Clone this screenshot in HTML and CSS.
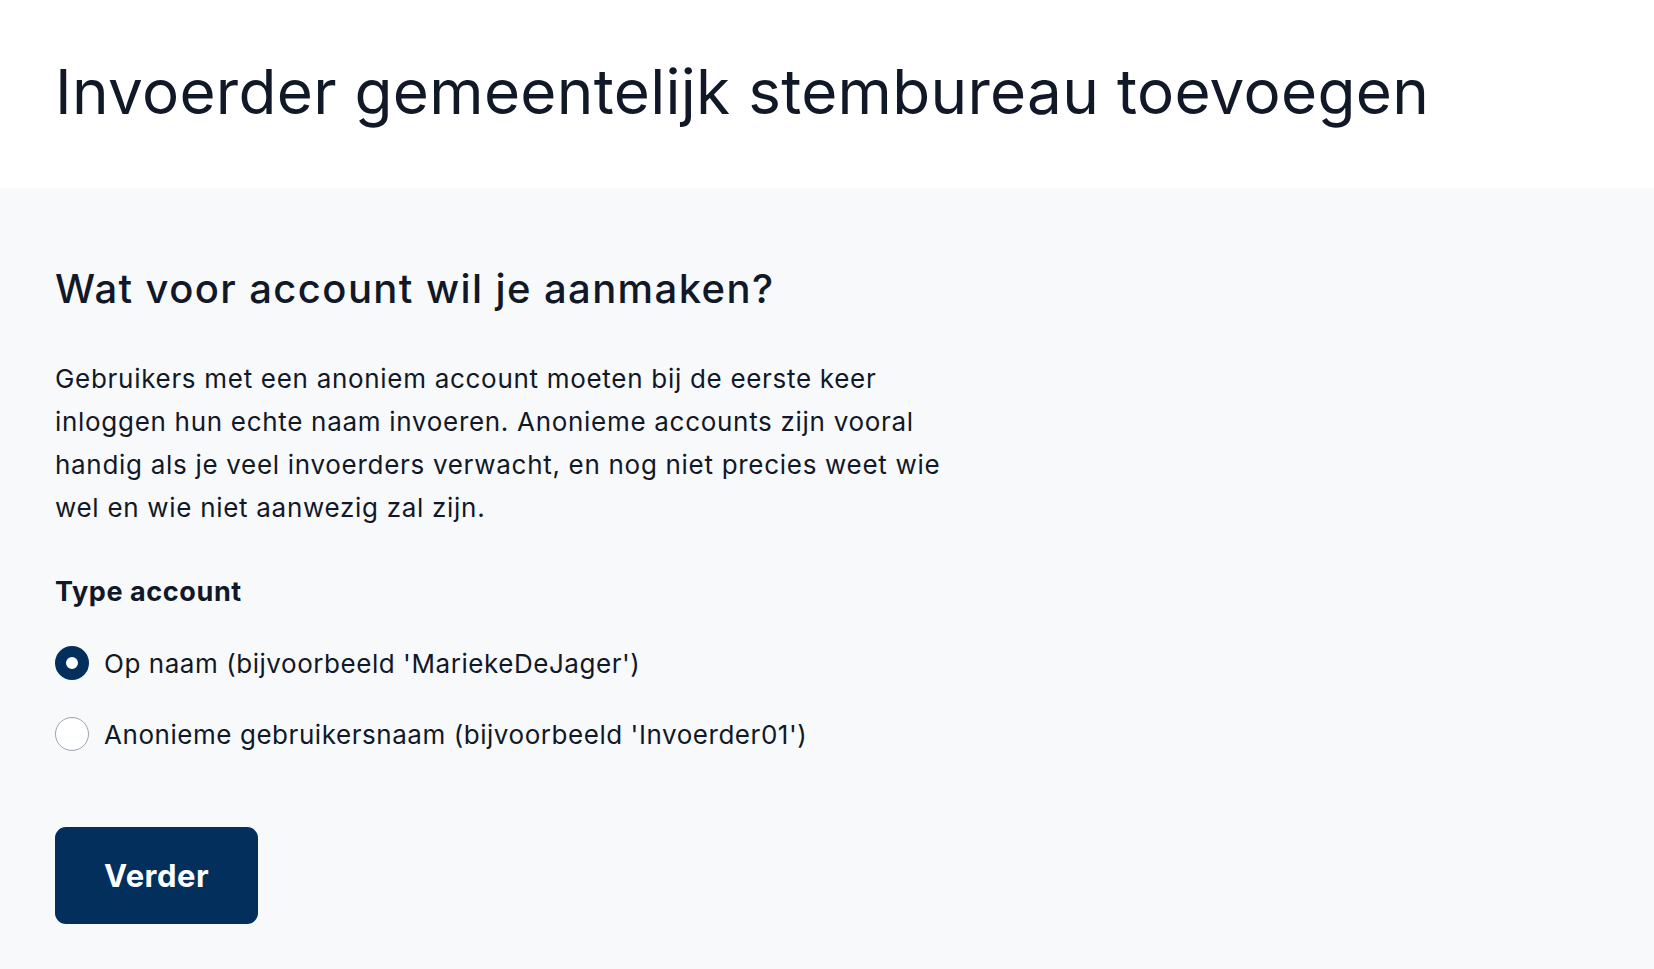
FILE: index.html
```html
<!DOCTYPE html>
<html>
	<head>
		<meta charset="utf-8" />
		<title>Invoerder gemeentelijk stembureau toevoegen</title>
		<link rel="stylesheet" href="styles.css">
	</head>
	<body>
		<header class="page-header">
			<h1>Invoerder gemeentelijk stembureau toevoegen</h1>
		</header>
		<main class="page-main">
			<form class="account-form">
				<h2>Wat voor account wil je aanmaken?</h2>
				<p class="intro">Gebruikers met een anoniem account moeten bij de eerste keer inloggen hun echte naam invoeren. Anonieme accounts zijn vooral handig als je veel invoerders verwacht, en nog niet precies weet wie wel en wie niet aanwezig zal zijn.</p>
				<fieldset class="choice">
					<legend>Type account</legend>
					<label class="radio">
						<input type="radio" name="type" value="named" checked>
						<span class="dot"></span>
						<span>Op naam (bijvoorbeeld 'MariekeDeJager')</span>
					</label>
					<label class="radio">
						<input type="radio" name="type" value="anonymous">
						<span class="dot"></span>
						<span>Anonieme gebruikersnaam (bijvoorbeeld 'Invoerder01')</span>
					</label>
				</fieldset>
				<button type="button" class="btn-primary">Verder</button>
			</form>
		</main>
	</body>
</html>
```

FILE: styles.css
```css
html, body{
	margin: 0;
	padding: 0;
}
body{
	font-family: "Inter", "Noto Sans", sans-serif;
	color: #111827;
	background-color: #f8f9fb;
	min-height: 100vh;
}
.page-header{
	background-color: #ffffff;
	height: 188px;
	padding: 0 55px;
	box-sizing: border-box;
	display: flex;
	align-items: center;
}
.page-header h1{
	margin: 0 0 6px;
	font-size: 62px;
	font-weight: 400;
	letter-spacing: 0.3px;
	color: #111827;
}
.page-main{
	padding: 76px 55px 40px;
}
.account-form h2{
	margin: 0 0 44px;
	font-size: 40px;
	font-weight: 500;
	letter-spacing: 1.4px;
}
.intro{
	margin: 0 0 46px;
	max-width: 900px;
	font-size: 26px;
	line-height: 43px;
	letter-spacing: 0.7px;
}
.choice{
	border: 0;
	margin: 0;
	padding: 0;
}
.choice legend{
	padding: 0;
	margin-bottom: 37px;
	font-size: 27px;
	font-weight: 700;
	letter-spacing: 0.6px;
}
.radio{
	display: flex;
	align-items: center;
	gap: 15px;
	height: 36px;
	margin-bottom: 35px;
	font-size: 26px;
	letter-spacing: 0.55px;
	cursor: pointer;
}
.radio input{
	position: absolute;
	opacity: 0;
}
.dot{
	width: 34px;
	height: 34px;
	box-sizing: border-box;
	border-radius: 50%;
	border: 1.5px solid #9ca3af;
	background-color: #ffffff;
}
.radio input:checked + .dot{
	border: 11px solid #022f5c;
}
.btn-primary{
	margin-top: 40px;
	width: 203px;
	height: 97px;
	border: 0;
	border-radius: 11px;
	background-color: #022f5c;
	color: #ffffff;
	font-family: inherit;
	font-size: 31px;
	font-weight: 700;
	letter-spacing: 0.5px;
	cursor: pointer;
}
```
